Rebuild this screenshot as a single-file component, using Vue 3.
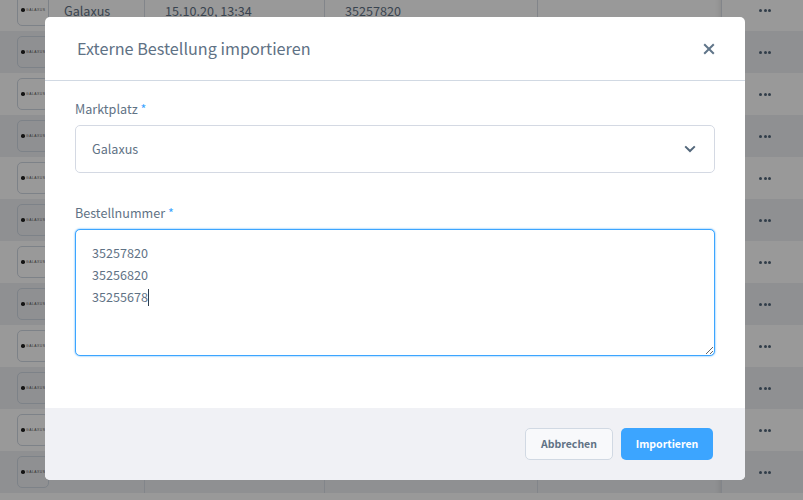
<script setup>
const rows = Array.from({ length: 12 }, (_, i) => i)
const numbers = '35257820\n35256820\n35255678'
</script>

<template>
  <div class="page">
    <div class="table">
      <div v-for="r in rows" :key="r" class="row" :class="{ alt: r % 2 === 1 }">
        <div class="cell logo-cell">
          <div class="logo"><i class="logo-dot"></i><span class="logo-text">GALAXUS</span></div>
          <span class="name">{{ r === 0 ? 'Galaxus' : '' }}</span>
        </div>
        <div class="cell date">{{ r === 0 ? '15.10.20, 13:34' : '' }}</div>
        <div class="cell order">{{ r === 0 ? '35257820' : '' }}</div>
        <div class="cell blank"></div>
        <div class="cell actions">
          <span class="dots"><i></i><i></i><i></i></span>
        </div>
      </div>
    </div>
    <div class="overlay"></div>

    <div class="modal">
      <header class="modal-head">
        <h2>Externe Bestellung importieren</h2>
        <svg class="close" width="12" height="12" viewBox="0 0 12 12">
          <path d="M1.2 1.2 10.8 10.8M10.8 1.2 1.2 10.8" stroke="#607589" stroke-width="2" fill="none" />
        </svg>
      </header>
      <div class="modal-body">
        <div class="field first">
          <label>Marktplatz <em>*</em></label>
          <div class="select">
            <span>Galaxus</span>
            <svg class="chevron" width="12" height="8" viewBox="0 0 12 8">
              <path d="M1.2 1.4 6 6 10.8 1.4" stroke="#53677b" stroke-width="2" fill="none" />
            </svg>
          </div>
        </div>
        <div class="field second">
          <label>Bestellnummer <em>*</em></label>
          <div class="area-wrap">
            <textarea class="area" :value="numbers"></textarea>
            <span class="caret"></span>
          </div>
        </div>
      </div>
      <footer class="modal-foot">
        <button class="btn cancel">Abbrechen</button>
        <button class="btn primary">Importieren</button>
      </footer>
    </div>
  </div>
</template>

<style>
html, body { margin: 0; overflow: hidden; }
</style>

<style scoped>
.page {
  position: relative;
  width: 803px;
  height: 500px;
  overflow: hidden;
  background: #fff;
  font-family: "Noto Sans CJK SC", "Source Sans Pro", "Open Sans", sans-serif;
  color: #5f7285;
}
.table { margin-top: -11px; }
.row {
  display: grid;
  grid-template-columns: 144px 180px 213px 184px 82px;
  height: 42px;
  background: #fff;
}
.row.alt { background: #eef0f3; }
.cell {
  display: flex;
  align-items: center;
  font-size: 12.6px;
  border-left: 1px solid #d9dee6;
  box-sizing: border-box;
}
.logo-cell {
  border-left: 0;
  padding-left: 17px;
}
.name { margin-left: 15px; }
.date { padding-left: 20px; }
.order { padding-left: 20px; }
.blank { box-shadow: inset -6px 0 5px -4px rgba(0, 0, 0, .08); }
.actions { padding-left: 37px; }
.logo {
  width: 32px;
  height: 32px;
  box-sizing: border-box;
  border: 1px solid #d1d9e3;
  border-radius: 5px;
  display: flex;
  align-items: center;
  padding-left: 3px;
  gap: 1.5px;
  overflow: hidden;
}
.logo-dot {
  width: 3.5px;
  height: 3.5px;
  border-radius: 50%;
  background: #222;
  flex: none;
}
.logo-text {
  font-size: 3.4px;
  letter-spacing: .5px;
  color: #555;
  white-space: nowrap;
  font-family: "Liberation Sans", sans-serif;
}
.dots { display: flex; gap: 1.5px; }
.dots i {
  width: 3px;
  height: 3px;
  border-radius: 50%;
  background: #52667a;
}
.overlay {
  position: absolute;
  inset: 0;
  background: rgba(0, 0, 0, .4);
}
.modal {
  position: absolute;
  left: 45px;
  top: 17px;
  width: 700px;
  height: 463px;
  background: #fff;
  border-radius: 5px;
  overflow: hidden;
  display: flex;
  flex-direction: column;
}
.modal-head {
  height: 64px;
  box-sizing: border-box;
  border-bottom: 1px solid #d1d9e3;
  padding: 0 30px 2px 32px;
  display: flex;
  align-items: center;
  justify-content: space-between;
}
.modal-head h2 {
  margin: 0;
  font-size: 16.2px;
  font-weight: 400;
  color: #5f7285;
}
.close { margin-top: 2px; }
.modal-body {
  flex: 1;
  padding: 0 30px;
}
.field label {
  display: block;
  font-size: 12.6px;
  line-height: 20px;
  color: #5f7285;
}
.field em { font-style: normal; color: #3ca5ff; }
.first { padding-top: 18px; }
.second { padding-top: 30px; }
.first label { margin-bottom: 6px; }
.second label { margin-bottom: 6px; }
.select {
  height: 48px;
  box-sizing: border-box;
  border: 1px solid #d4d9e3;
  border-radius: 5px;
  padding: 0 18px 2px 16px;
  display: flex;
  align-items: center;
  justify-content: space-between;
  font-size: 12.6px;
}
.chevron { margin-top: 2px; }
.area-wrap { position: relative; height: 127px; }
.area {
  display: block;
  width: 100%;
  height: 127px;
  box-sizing: border-box;
  border: 1px solid #3ca5ff;
  border-radius: 5px;
  box-shadow: 0 0 2px #3ca5ff;
  outline: 0;
  padding: 12px 16px;
  font: inherit;
  font-size: 12.6px;
  line-height: 22px;
  color: #5f7285;
  background: #fff;
  margin: 0;
}
.caret {
  position: absolute;
  left: 73px;
  top: 60px;
  width: 1px;
  height: 17px;
  background: #2c3e50;
}
.modal-foot {
  height: 72px;
  box-sizing: border-box;
  background: #f0f1f5;
  display: flex;
  justify-content: flex-end;
  align-items: center;
  gap: 8px;
  padding: 0 32px 0 0;
}
.btn {
  height: 32px;
  box-sizing: border-box;
  border-radius: 5px;
  font-family: inherit;
  font-size: 10.5px;
  font-weight: 700;
  padding: 0 0 2px;
  margin: 0;
}
.cancel {
  width: 88px;
  background: #f8f9fb;
  border: 1px solid #d1d9e3;
  color: #607285;
}
.primary {
  width: 92px;
  background: #3ca5ff;
  border: 0;
  color: #fff;
}
</style>
